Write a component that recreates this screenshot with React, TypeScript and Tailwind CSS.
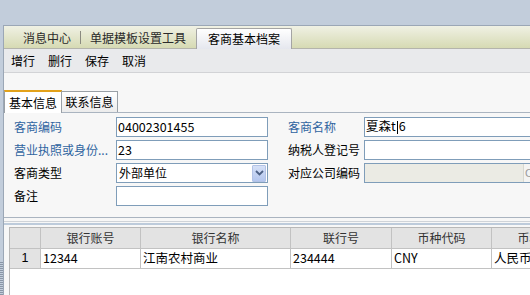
import React from "react";

const cjk = { fontFamily: '"Noto Sans CJK SC", "Liberation Sans", sans-serif' };

type Field = { label: string; value?: string; blue?: boolean; kind?: "text" | "select" | "disabled" };

const leftFields: Field[] = [
  { label: "客商编码", value: "04002301455", blue: true },
  { label: "营业执照或身份...", value: "23", blue: true },
  { label: "客商类型", value: "外部单位", kind: "select" },
  { label: "备注", value: "" },
];

const rightFields: Field[] = [
  { label: "客商名称", value: "夏森t6", blue: true },
  { label: "纳税人登记号", value: "" },
  { label: "对应公司编码", value: "", kind: "disabled" },
];

const columns = [
  { title: "银行账号", w: "w-[100px]" },
  { title: "银行名称", w: "w-[150px]" },
  { title: "联行号", w: "w-[101px]" },
  { title: "币种代码", w: "w-[100px]" },
  { title: "币种名称", w: "w-[100px]" },
];

const rowData = ["12344", "江南农村商业", "234444", "CNY", "人民币"];

function Input({ f, wide }: { f: Field; wide?: boolean }) {
  const w = wide ? "w-[168px]" : "w-[152px]";
  if (f.kind === "select") {
    return (
      <div className={`${w} h-5 border border-[#7f9db9] bg-white flex items-center justify-between pl-[2px] pr-px shrink-0`}>
        <span className="text-[12px] text-black leading-none" style={cjk}>{f.value}</span>
        <div className="w-[14px] h-[17px] bg-gradient-to-b from-[#d6e1f7] to-[#b4c6ee] border border-[#b3c3e6] flex items-center justify-center rounded-[1px]">
          <svg width="9" height="6" viewBox="0 0 9 6">
            <path d="M1 1 L4.5 4.5 L8 1" stroke="#4d6185" strokeWidth="1.8" fill="none" />
          </svg>
        </div>
      </div>
    );
  }
  if (f.kind === "disabled") {
    return (
      <div className={`${w} h-5 border border-[#7f9db9] bg-[#ebebe4] flex items-center pl-[158px] shrink-0`}>
        <div className="w-[10px] h-full bg-[#f4f4f2] border-l border-[#d8d8d0] flex items-center shrink-0">
          <span className="text-[11px] text-[#9a9a9a] ml-px leading-none" style={{ fontFamily: '"Liberation Sans", sans-serif' }}>C</span>
        </div>
      </div>
    );
  }
  return (
    <div className={`${w} h-5 border border-[#7f9db9] bg-white flex items-center pl-px shrink-0`}>
      <span className="text-[12.5px] text-black leading-none" style={cjk}>
        {f.value === "夏森t6" ? (
          <>
            夏森t<span className="inline-block w-px h-[13px] bg-black align-middle mx-px" />6
          </>
        ) : (
          f.value
        )}
      </span>
    </div>
  );
}

function Row({ f, labelW, wide }: { f: Field; labelW: string; wide?: boolean }) {
  return (
    <div className="flex items-center h-5">
      <div className={`${labelW} shrink-0 text-[12px] leading-none whitespace-nowrap ${f.blue ? "text-[#2f64a0]" : "text-black"}`} style={cjk}>
        {f.label}
      </div>
      <Input f={f} wide={wide} />
    </div>
  );
}

export default function App() {
  return (
    <div className="w-[530px] h-[295px] overflow-hidden bg-[#c2cddb] flex flex-col" style={cjk}>
      <div className="h-[25px] shrink-0" />
      <div className="flex flex-1 min-h-0">
        <div className="w-[3px] shrink-0 flex flex-col justify-end">
          <div className="h-[33px] bg-[repeating-linear-gradient(180deg,#8a96a6_0px,#8a96a6_1px,#c2cddb_1px,#c2cddb_2px)]" />
        </div>
        <div className="flex-1 min-w-0 border-l border-t border-[#9ba7b6] flex flex-col bg-[#f7f7f7]">
          {/* document tabs */}
          <div className="h-[23px] shrink-0 bg-gradient-to-b from-[#f0f1e4] to-[#d6dab3] border-b border-[#b4b4ac] flex items-end relative">
            <div className="flex items-center h-[21px] pl-[19px] text-[12px] text-[#2a2a2a]">
              <span>消息中心</span>
              <span className="mx-[9px] w-px h-[13px] bg-[#8a8a80]" />
              <span>单据模板设置工具</span>
            </div>
            <div className="ml-[10px] h-[21px] -mb-px px-[11px] flex items-center bg-gradient-to-b from-white to-[#e5e7ee] border border-b-0 border-[#a4a4a4] rounded-t-[2px] text-[12px] text-black">
              客商基本档案
            </div>
          </div>
          {/* toolbar */}
          <div className="h-[24px] shrink-0 bg-[#e9eaec] border-b border-[#d2d3d6] flex items-center pl-[7px] gap-[13px] text-[12px] text-black">
            <span>增行</span>
            <span>删行</span>
            <span>保存</span>
            <span>取消</span>
          </div>
          {/* sub tabs */}
          <div className="mt-[16px] h-[23px] shrink-0 flex items-end">
            <div className="h-[23px] w-[58px] bg-white border-t-2 border-t-[#e3a21a] border-l border-r border-[#9aa0a6] flex items-center justify-center text-[12px] text-black -mb-px relative z-10">
              基本信息
            </div>
            <div className="h-[21px] w-[56px] bg-gradient-to-b from-white to-[#ececec] border-t border-r border-[#9aa0a6] flex items-center justify-center text-[12px] text-black">
              联系信息
            </div>
          </div>
          {/* form */}
          <div className="h-[106px] shrink-0 border-t border-b border-[#aab4c0] pt-[4px] flex overflow-hidden">
            <div className="w-[272px] shrink-0 pl-[10px] flex flex-col gap-[3px]">
              {leftFields.map((f) => (
                <Row key={f.label} f={f} labelW="w-[102px]" />
              ))}
            </div>
            <div className="shrink-0 pl-[12px] flex flex-col gap-[3px]">
              {rightFields.map((f) => (
                <Row key={f.label} f={f} labelW="w-[76px]" wide />
              ))}
            </div>
          </div>
          {/* splitter */}
          <div className="h-[3px] shrink-0" />
          <div className="h-px shrink-0 bg-[#cfd3d8]" />
          <div className="h-px shrink-0 bg-[#f7f7f7]" />
          <div className="h-[2px] shrink-0 bg-[#bdcbdb]" />
          <div className="h-[2px] shrink-0 bg-[#f7f7f7]" />
          {/* grid */}
          <div className="flex-1 ml-[5px] bg-white border-l border-t border-[#b8b8b8] min-h-0 overflow-hidden">
            <div className="flex h-[21px] bg-[#e3e3e3] border-b border-[#c2c2c2] text-[12px] text-[#333]">
              <div className="w-[31px] shrink-0 border-r border-[#c2c2c2]" />
              {columns.map((c) => (
                <div key={c.title} className={`${c.w} shrink-0 border-r border-[#c2c2c2] flex items-center justify-center whitespace-nowrap`}>
                  {c.title}
                </div>
              ))}
            </div>
            <div className="flex h-[20px] border-b border-[#c2c2c2] text-[12.5px] text-black">
              <div className="w-[31px] shrink-0 bg-[#e3e3e3] border-r border-[#c2c2c2] flex items-center justify-center" style={{ fontFamily: '"Liberation Sans", sans-serif' }}>
                1
              </div>
              {columns.map((c, i) => (
                <div key={c.title} className={`${c.w} shrink-0 border-r border-[#c2c2c2] flex items-center pl-[2px] whitespace-nowrap`}>
                  {rowData[i]}
                </div>
              ))}
            </div>
          </div>
        </div>
      </div>
    </div>
  );
}
